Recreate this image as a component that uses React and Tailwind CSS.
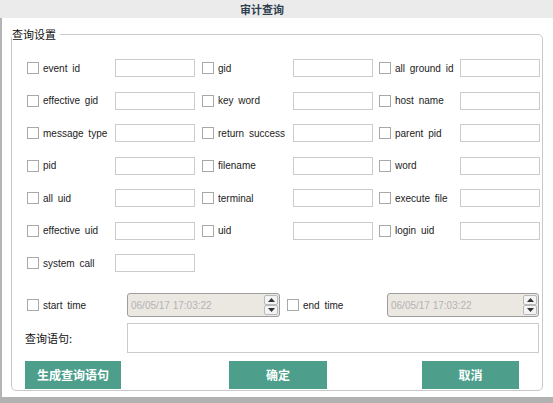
import React from "react";

// 审计查询 窗口
const rows = [
    ["event id", "gid", "all ground id"],
    ["effective gid", "key word", "host name"],
    ["message type", "return success", "parent pid"],
    ["pid", "filename", "word"],
    ["all uid", "terminal", "execute file"],
    ["effective uid", "uid", "login uid"],
    ["system call"],
];

const latin = { fontFamily: '"Liberation Sans", Arial, sans-serif' };
const cjk = { fontFamily: '"Noto Sans CJK SC", "Liberation Sans", sans-serif' };

function Check({ label, className = "" }) {
    return (
        <label className={`flex items-center h-[18px] ${className}`}>
            <span className="w-[12px] h-[12px] border border-[#a9a9a9] bg-white shrink-0" />
            <span className="ml-[4px] text-[10px] text-[#222] whitespace-nowrap [word-spacing:2px]" style={latin}>{label}</span>
        </label>
    );
}

function TextBox({ className = "" }) {
    return <div className={`h-[18px] border border-[#cbcbcb] bg-white ${className}`} />;
}

function Arrow({ up }) {
    return (
        <div className="flex-1 flex items-center justify-center border border-[#b9b9b9] rounded-[2px] bg-[#f3f3f3]">
            <svg width="7" height="4" viewBox="0 0 7 4">
                {up ? <path d="M0 4 L3.5 0 L7 4 Z" fill="#333" /> : <path d="M0 0 L3.5 4 L7 0 Z" fill="#333" />}
            </svg>
        </div>
    );
}

function DateBox({ className = "" }) {
    return (
        <div className={`h-[24px] flex border border-[#9d9d9d] rounded-[3px] bg-[#ebe8e2] ${className}`}>
            <div className="flex-1 flex items-center pl-[3px] text-[10px] text-[#b3b3b3]" style={latin}>06/05/17 17:03:22</div>
            <div className="w-[14px] flex flex-col mr-px my-px">
                <Arrow up />
                <Arrow />
            </div>
        </div>
    );
}

function Btn({ children, className = "" }) {
    return (
        <button type="button" className={`h-[28px] bg-[#4d9f8c] text-white text-[12px] font-bold ${className}`} style={cjk}>
            {children}
        </button>
    );
}

export default function App() {
    return (
        <div className="w-[553px] h-[403px] bg-white flex flex-col overflow-hidden">
            {/* 标题栏 */}
            <div className="h-[18px] bg-[#ebebeb] flex items-center pl-[240px] text-[11px] font-bold text-[#2e3f4f]" style={cjk}>
                审计查询
            </div>

            <div className="flex-1 border-l-2 border-[#b4b4b4] pl-[9px] pt-[10px]">
                <fieldset className="w-[532px] border border-[#c9c9c9] rounded-[5px] pl-[14px] pt-[18px] pb-px">
                    <legend className="text-[11px] leading-[13px] text-[#111] pr-[4px] -ml-[14px]" style={cjk}>查询设置</legend>

                    {/* 条件 */}
                    <div className="ml-px grid grid-cols-[88px_80px_98px_80px_87px_80px] gap-y-[14.5px]">
                        {rows.map((r) => (
                            <React.Fragment key={r[0]}>
                                <Check label={r[0]} />
                                <TextBox />
                                {r[1] && <Check label={r[1]} className="pl-[7px]" />}
                                {r[1] && <TextBox />}
                                {r[2] && <Check label={r[2]} className="pl-[6px]" />}
                                {r[2] && <TextBox />}
                            </React.Fragment>
                        ))}
                    </div>

                    {/* 时间 */}
                    <div className="ml-px mt-[21px] flex items-center">
                        <Check label="start time" className="w-[100px]" />
                        <DateBox className="w-[153px]" />
                        <Check label="end time" className="w-[107px] pl-[7px]" />
                        <DateBox className="w-[152px]" />
                    </div>

                    {/* 查询语句 */}
                    <div className="-ml-px mt-[6px] flex items-center">
                        <div className="w-[102px] text-[11px] text-[#111]" style={cjk}>查询语句:</div>
                        <div className="w-[412px] h-[30px] border border-[#cbcbcb] bg-white" />
                    </div>

                    {/* 按钮 */}
                    <div className="-ml-px mt-[8px] flex">
                        <Btn className="w-[96px]">生成查询语句</Btn>
                        <Btn className="w-[98px] ml-[108px]">确定</Btn>
                        <Btn className="w-[97px] ml-[95px]">取消</Btn>
                    </div>
                </fieldset>
            </div>

            <div className="h-[6px] bg-[#b2b2b2]" />
        </div>
    );
}
